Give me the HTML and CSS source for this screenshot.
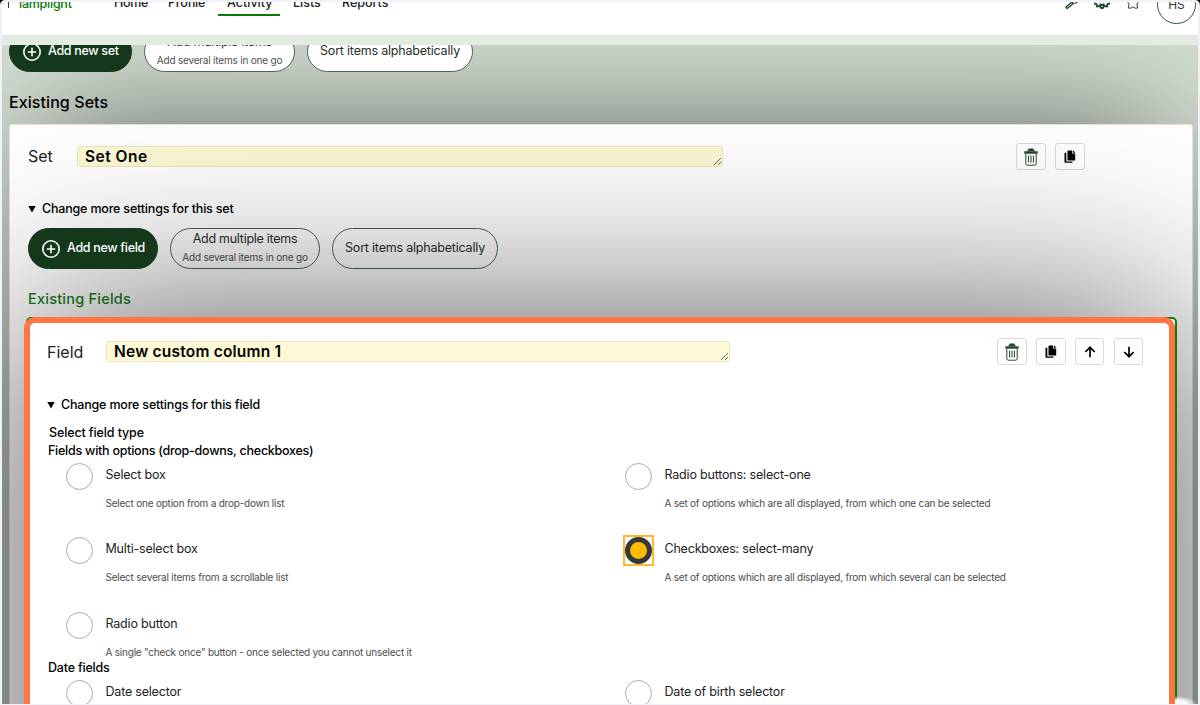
FILE: index.html
```html
<!DOCTYPE html>
<html lang="en">
<head>
<meta charset="utf-8">
<title>Lamplight</title>
<link rel="stylesheet" href="styles.css">
</head>
<body>
<svg class="defs" width="0" height="0">
  <symbol id="plus" viewBox="0 0 20 20"><circle cx="10" cy="10" r="8.2"/><path d="M10 5.8v8.4M5.8 10h8.4"/></symbol>
  <symbol id="trash" viewBox="0 0 14 18"><path d="M4.5 1.2h5M3.5 2.5h7" stroke-width="1.6"/><path d="M.3 4.5h13.4" stroke-width="2.4"/><path d="M1.8 6v9.5q0 1.7 1.7 1.7h7q1.7 0 1.7-1.7V6M4.6 7.5v7M7 7.5v7M9.4 7.5v7" stroke-width="1"/></symbol>
  <symbol id="copy" viewBox="0 0 12 13"><path d="M4.2.5h4v3h3v6.5q0 .6-.6.6H4.2q-.7 0-.7-.7V1.2q0-.7.7-.7z"/><path d="M9 .3 11.4 2.8H9z"/><path d="M.5 2.7h1.8v8.8h6.2v1.2H1.2q-.7 0-.7-.7z"/></symbol>
  <symbol id="arrow" viewBox="0 0 12 12"><path d="M6 11.3V1.5M1.3 6 6 1.3 10.7 6"/></symbol>
</svg>
<div class="app">
  <header class="header">
    <div class="brand"><i class="lamp"></i>lamplight</div>
    <nav class="nav"><a class="home">Home</a><a class="profile">Profile</a><a class="active">Activity</a><a class="lists">Lists</a><a class="reports">Reports</a></nav>
    <div class="tools">
      <svg class="tool wrench" viewBox="0 0 16 16"><path d="M2 14.2 9 8.4" stroke-width="3.2"/><path d="M3 13.4 8 9.3" stroke="#fff" stroke-width=".8"/><path d="M8 9.5 12 9l2.5-2"/></svg>
      <svg class="tool gear" viewBox="0 0 18 16"><path d="M1 9.5l2.5.5.5 2.5 3-.5 1.2 2h1.6l1.2-2 3 .5.5-2.5 2.5-.5M6.5 10q2.5 2 5 0"/></svg>
      <svg class="tool star" viewBox="0 0 16 16"><path d="M8 1.5l2 4.3 4.7.5-2.8 3.6.8 4.1-2.5.2L8 12.8l-2.2 1.4-2.5-.2.8-4.1L1.3 6.3 6 5.8z"/></svg>
      <div class="avatar">HS</div>
    </div>
  </header>
  <main class="main">
    <div class="actions top-actions">
      <button class="pill primary"><svg><use href="#plus"/></svg><span>Add new set</span></button>
      <button class="pill multiple"><span>Add multiple items</span><small>Add several items in one go</small></button>
      <button class="pill sort">Sort items alphabetically</button>
    </div>
    <h2 class="sets-title">Existing Sets</h2>
    <section class="set-card">
      <div class="title-row">
        <span class="title-label">Set</span><textarea class="title-input">Set One</textarea>
        <div class="icon-buttons"><button><svg class="trash"><use href="#trash"/></svg></button><button><svg class="copy"><use href="#copy"/></svg></button></div>
      </div>
      <div class="summary"><i class="marker"></i>Change more settings for this set</div>
      <div class="actions">
        <button class="pill primary"><svg><use href="#plus"/></svg><span>Add new field</span></button>
        <button class="pill multiple"><span>Add multiple items</span><small>Add several items in one go</small></button>
        <button class="pill sort">Sort items alphabetically</button>
      </div>
      <h3 class="fields-title">Existing Fields</h3>
      <div class="field-edge"><section class="field-card">
        <div class="title-row">
          <span class="title-label">Field</span><textarea class="title-input">New custom column 1</textarea>
          <div class="icon-buttons"><button><svg class="trash"><use href="#trash"/></svg></button><button><svg class="copy"><use href="#copy"/></svg></button><button><svg class="arrow"><use href="#arrow"/></svg></button><button><svg class="arrow down"><use href="#arrow"/></svg></button></div>
        </div>
        <div class="summary"><i class="marker"></i>Change more settings for this field</div>
        <div class="type-title">Select field type</div>
        <div class="group-title">Fields with options (drop-downs, checkboxes)</div>
        <div class="options">
          <label class="option"><i class="radio"></i><span class="name">Select box</span><span class="desc">Select one option from a drop-down list</span></label>
          <label class="option"><i class="radio"></i><span class="name">Radio buttons: select-one</span><span class="desc">A set of options which are all displayed, from which one can be selected</span></label>
          <label class="option"><i class="radio"></i><span class="name">Multi-select box</span><span class="desc">Select several items from a scrollable list</span></label>
          <label class="option"><i class="radio checked"></i><span class="name">Checkboxes: select-many</span><span class="desc">A set of options which are all displayed, from which several can be selected</span></label>
          <label class="option"><i class="radio"></i><span class="name">Radio button</span><span class="desc">A single "check once" button - once selected you cannot unselect it</span></label>
        </div>
        <div class="group-title dates">Date fields</div>
        <div class="options">
          <label class="option"><i class="radio"></i><span class="name">Date selector</span></label>
          <label class="option"><i class="radio"></i><span class="name">Date of birth selector</span></label>
        </div>
      </section></div>
    </section>
  </main>
  <div class="corner-glow"></div>
</div>
</body>
</html>
```
FILE: styles.css
```css
* { box-sizing: border-box; }
html { height: 705px; overflow: hidden; background: #000; }
body { margin: 0; height: 705px; overflow: hidden; padding: 2px 2px 1px; background: #f2f1f8; border-radius: 5px 5px 0 0; font-family: Inter, sans-serif; font-size: 12.5px; color: #000; }
.defs { position: absolute; }
h2, h3 { margin: 0; font-weight: 500; }
button { font: inherit; color: inherit; padding: 0; margin: 0; }
.app { position: relative; height: 702px; overflow: hidden; border-radius: 5px 5px 0 0; background: #d3ded2; }

.header { position: relative; z-index: 3; height: 43px; display: flex; background: #fff; border-bottom: 10px solid #e3ece1; overflow: hidden; }
.brand { width: 112px; padding-left: 6px; margin-top: -8px; line-height: 20px; color: #087a08; font-weight: 500; white-space: nowrap; letter-spacing: -.25px; }
.lamp { display: inline-block; width: 1px; height: 6px; margin-right: 10px; background: #15501a; vertical-align: 0; }
.nav { display: flex; width: 900px; margin-top: -9px; height: 23px; line-height: 20px; font-weight: 500; color: #16241a; }
.nav a { white-space: nowrap; }
.home { width: 54px; letter-spacing: -.3px; }
.profile { width: 50px; letter-spacing: -.2px; }
.nav .active { width: 62px; margin-right: 13px; padding-left: 9px; border-bottom: 2px solid #087a08; }
.lists { width: 49px; }
.tools { display: flex; margin-left: auto; margin-top: -17px; height: 38px; flex: none; }
.tool { width: 16px; height: 16px; margin: 9px 13px 0 0; fill: none; stroke: #24472b; stroke-width: 1.2; }
.gear { width: 18px; stroke-width: 1.8; margin-right: 14px; }
.star { stroke-width: 1; margin-right: 16px; }
.avatar { width: 39px; height: 39px; margin-right: 2px; border: 1px solid #34573a; border-radius: 50%; text-align: center; line-height: 38px; font-size: 12px; color: #333; }

.main { padding: 0 5px 0 7px; }
.actions { display: flex; gap: 12px; }
.top-actions { position: relative; z-index: 2; margin-top: -14px; }
.pill { height: 41px; border: 1px solid #48684c; border-radius: 21px; background: transparent; color: #27302a; white-space: nowrap; letter-spacing: -.2px; }
.top-actions .pill { background: #fff; }
.pill.primary { display: flex; align-items: center; width: 130px; padding: 0 0 1px 13px; border-color: #14391a; background: #14391a; color: #fff; font-weight: 500; letter-spacing: -.32px; }
.set-card .primary { position: relative; z-index: 1; }
.top-actions .primary { width: 123px; background: #14391a; }
.primary svg { width: 20px; height: 20px; margin: 2px 6px 0 -1px; fill: none; stroke: #fff; stroke-width: 1.6; }
.primary span { margin-top: -2px; }
.pill.multiple { width: 151px; display: flex; flex-direction: column; align-items: center; }
.multiple span { line-height: 20px; letter-spacing: -.27px; }
.multiple small { font-size: 10px; line-height: 17px; color: #4c514e; }
.pill.sort { width: 166px; padding-bottom: 2px; }
.set-card .multiple { width: 150px; }
.sets-title { position: relative; z-index: 2; height: 52px; line-height: 61px; font-size: 16px; letter-spacing: .08px; }
.set-card { position: relative; height: 1400px; padding: 18px 15px 0 18px; border: 1px solid #e1e4e1; border-radius: 3px; background: #fff; box-shadow: 0 -32px 124px -32px rgba(0, 0, 0, .5); }
.title-row { display: flex; height: 27px; align-items: center; }
.title-label { width: 49px; font-size: 16px; color: #222; font-weight: 400; line-height: 20px; margin-top: -1px; }
.title-input { display: block; width: 646px; height: 21px; padding: 0 7px; border: 1px solid #f1e4b7; border-radius: 3px; background: #fdf9d6; font: 600 15.5px/19px Inter, sans-serif; letter-spacing: .5px; overflow: hidden; color: #000; }
.icon-buttons { display: flex; gap: 9px; margin-left: 293px; }
.icon-buttons button { width: 30px; height: 27px; border: 1px solid #d9dad9; border-radius: 3px; background: transparent; display: flex; align-items: center; justify-content: center; }
.trash { width: 14px; height: 18px; fill: none; stroke: #24472b; }
.copy { width: 12px; height: 13px; fill: #000; }
.arrow { width: 12px; height: 12px; fill: none; stroke: #000; stroke-width: 1.7; }
.down { transform: rotate(180deg); }
.summary { height: 20px; line-height: 20px; margin-top: 29px; font-weight: 500; letter-spacing: -.19px; display: flex; align-items: center; }
.marker { width: 8px; height: 7px; margin-right: 6px; background: #000; clip-path: polygon(0 0, 100% 0, 50% 100%); }
.set-card > .actions { margin-top: 9px; }
.fields-title { height: 48px; line-height: 60px; font-size: 14.5px; letter-spacing: .23px; color: #18801a; }

.field-edge { position: relative; width: 1151px; height: 1000px; margin: 0 0 0 -2px; border: 2px solid #087a08; border-radius: 5px; background: #fff; box-shadow: 0 0 200px rgba(0, 0, 0, .66); }
.field-card { width: 1151px; height: 1000px; margin: -2px 0 0 -4px; padding: 15px 20px 0 17px; border: 6px solid #ff7543; border-radius: 11px; background: #fff; }
.field-card .title-label { width: 59px; margin-top: 0; }
.field-card .title-input { width: 624px; letter-spacing: .22px; }
.field-card .icon-buttons { margin-left: 267px; }
.field-card .icon-buttons button:nth-child(n+3) { width: 29px; }
.field-card .icon-buttons button:nth-child(4) { margin-left: 1px; }
.field-card .summary { margin-top: 30px; }
.type-title { margin: 9px 0 0 2px; line-height: 18px; font-weight: 500; letter-spacing: -.12px; }
.group-title { margin-left: 1px; line-height: 18px; font-weight: 500; letter-spacing: -.25px; }
.options { display: grid; grid-template-columns: 559px 500px; padding-left: 19px; }
.option { display: grid; grid-template-columns: 39.5px 1fr; grid-template-rows: 33px 41.4px; color: #222; }
.radio { position: relative; width: 27px; height: 27px; margin-top: 3px; border: 1px solid #aaa; border-radius: 50%; }
.checked { border: 5px solid #35383b; background: #ffb900; }
.checked::after { content: ""; position: absolute; inset: -7px; border: 2px solid #ffb92b; }
.name { line-height: 20px; padding-top: 5px; letter-spacing: -.2px; }
.desc { grid-column: 2; font-size: 10px; line-height: 20px; letter-spacing: -.22px; color: #4c4c4c; white-space: nowrap; }
.dates { margin-top: -24px; letter-spacing: -.2px; }
.corner-glow { position: absolute; z-index: 2; left: 1173px; bottom: 0; width: 22px; height: 8px; background: radial-gradient(ellipse 20px 8px at 2px 100%, #fff 45%, #fff0); }
```
